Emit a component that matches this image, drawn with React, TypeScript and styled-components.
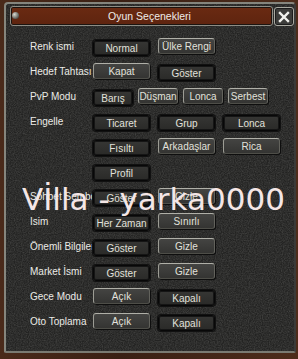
import React from 'react';
import styled, { createGlobalStyle } from 'styled-components';

const GlobalStyle = createGlobalStyle`
  html, body {
    margin: 0;
    padding: 0;
    background: #3f2416;
  }
  * {
    box-sizing: border-box;
  }
`;

const Frame = styled.div`
  width: 298px;
  height: 359px;
  padding: 2px 2px 6px 4px;
  background: linear-gradient(90deg, #4a2a1a, #3a2014 40%, #4d2c1b);
  font-family: 'Liberation Sans', Arial, sans-serif;
`;

const Panel = styled.div`
  position: relative;
  height: 100%;
  display: flex;
  flex-direction: column;
  background: #232322;
  border: 2px solid;
  border-color: #85857d #3a3a38 #7a7a72 #85857d;
  border-radius: 4px 4px 2px 2px;
  overflow: hidden;
`;

const Texture = styled.svg`
  position: absolute;
  inset: 0;
  width: 100%;
  height: 100%;
  pointer-events: none;
`;

const TitleRow = styled.div`
  position: relative;
  display: flex;
  gap: 1px;
  padding: 2px 0 0 4px;
`;

const TitleBar = styled.div`
  position: relative;
  flex: 1;
  height: 20px;
  display: flex;
  align-items: center;
  justify-content: center;
  padding-left: 16px;
  background: linear-gradient(#6a2a12, #5e240f);
  border: 1px solid #8d8d85;
  box-shadow: inset 0 0 0 1px #1c1410;
  border-radius: 3px;
  color: #f0ece8;
  font-size: 10.5px;
  overflow: hidden;
`;

const Pin = styled.span`
  position: absolute;
  left: 1px;
  top: 5px;
  width: 7px;
  height: 7px;
  border-radius: 50%;
  background: radial-gradient(circle at 35% 35%, #d8d8d0, #6a6a64 60%, #2a2a28);
`;

const CloseButton = styled.div`
  width: 20px;
  height: 19px;
  margin-top: 1px;
  display: flex;
  align-items: center;
  justify-content: center;
  background: #3c3c3a;
  border: 1px solid #a9a9a1;
  box-shadow: inset 0 0 0 1px #1c1c1c;
  border-radius: 3px;
`;

const Content = styled.div`
  position: relative;
  display: flex;
  flex-direction: column;
  gap: 9px;
  margin-top: 14px;
  padding-left: 24px;
`;

const Row = styled.div`
  display: grid;
  grid-template-columns: 63px auto;
  align-items: start;
`;

const Label = styled.div`
  height: 16px;
  line-height: 13px;
  font-size: 10px;
  color: #ebebe6;
  white-space: nowrap;
  overflow: hidden;
`;

const Buttons = styled.div<{ cols: number; width: number; gap: number }>`
  display: grid;
  grid-template-columns: repeat(${({ cols, width }) => `${cols}, ${width}px`});
  column-gap: ${({ gap }) => gap}px;
  row-gap: 9px;
`;

const Btn = styled.div<{ active?: boolean }>`
  height: 16px;
  display: flex;
  align-items: center;
  justify-content: center;
  font-size: 10px;
  color: #e2e2dc;
  white-space: nowrap;
  border-radius: 3px;
  border: 1px solid;
  ${({ active }) =>
    active
      ? `
    border-color: #b0b0a8 #62625c #4e4e48 #9c9c94;
    background: linear-gradient(#444442, #343432);
    box-shadow: 1px 1px 0 #0e0e0e;
    transform: translateY(-2px);
  `
      : `
    border-color: #080808;
    background: linear-gradient(#363634, #2a2a28);
    box-shadow: inset 0 0 0 1px #151515, 0 0 0 1px #111;
  `}
`;

const Watermark = styled.div`
  position: absolute;
  left: 16px;
  top: 180px;
  font-family: 'DejaVu Sans', sans-serif;
  font-size: 31px;
  line-height: 1;
  color: #f4e6e6;
  white-space: pre;
  pointer-events: none;
`;

type Opt = { text: string; active?: boolean };

const rows: { label: string; cols: number; width: number; gap: number; options: Opt[] }[] = [
  { label: 'Renk ismi', cols: 2, width: 57, gap: 8, options: [{ text: 'Normal' }, { text: 'Ülke Rengi', active: true }] },
  { label: 'Hedef Tahtası', cols: 2, width: 57, gap: 8, options: [{ text: 'Kapat', active: true }, { text: 'Göster' }] },
  {
    label: 'PvP Modu',
    cols: 4,
    width: 40,
    gap: 5,
    options: [{ text: 'Barış' }, { text: 'Düşman', active: true }, { text: 'Lonca', active: true }, { text: 'Serbest', active: true }],
  },
  {
    label: 'Engelle',
    cols: 3,
    width: 57,
    gap: 8,
    options: [
      { text: 'Ticaret' },
      { text: 'Grup' },
      { text: 'Lonca' },
      { text: 'Fısıltı' },
      { text: 'Arkadaşlar', active: true },
      { text: 'Rica', active: true },
      { text: 'Profil' },
    ],
  },
  { label: 'Sohbet Sembolü', cols: 2, width: 57, gap: 8, options: [{ text: 'Göster' }, { text: 'Gizle', active: true }] },
  { label: 'Isim', cols: 2, width: 57, gap: 8, options: [{ text: 'Her Zaman' }, { text: 'Sınırlı', active: true }] },
  { label: 'Önemli Bilgiler', cols: 2, width: 57, gap: 8, options: [{ text: 'Göster' }, { text: 'Gizle', active: true }] },
  { label: 'Market İsmi', cols: 2, width: 57, gap: 8, options: [{ text: 'Göster' }, { text: 'Gizle', active: true }] },
  { label: 'Gece Modu', cols: 2, width: 57, gap: 8, options: [{ text: 'Açık', active: true }, { text: 'Kapalı' }] },
  { label: 'Oto Toplama', cols: 2, width: 57, gap: 8, options: [{ text: 'Açık', active: true }, { text: 'Kapalı' }] },
];

export default function App() {
  return (
    <>
      <GlobalStyle />
      <Frame>
        <Panel>
          <Texture>
            <filter id="stone" colorInterpolationFilters="sRGB">
              <feTurbulence type="fractalNoise" baseFrequency="0.85" numOctaves="2" seed="4" />
              <feColorMatrix values="0 0 0 0 0.42  0 0 0 0 0.42  0 0 0 0 0.41  0 0 0 0.7 -0.2" />
            </filter>
            <rect width="100%" height="100%" filter="url(#stone)" />
          </Texture>
          <TitleRow>
            <TitleBar>
              <Pin />
              Oyun Seçenekleri
            </TitleBar>
            <CloseButton>
              <svg width="12" height="12" viewBox="0 0 12 12">
                <path d="M2 2 L10 10 M10 2 L2 10" stroke="#f2f2ee" strokeWidth="2.4" strokeLinecap="square" />
              </svg>
            </CloseButton>
          </TitleRow>
          <Content>
            {rows.map((row, i) => (
              <Row key={i}>
                <Label>{row.label}</Label>
                <Buttons cols={row.cols} width={row.width} gap={row.gap}>
                  {row.options.map((o, j) => (
                    <Btn key={j} active={o.active}>
                      {o.text}
                    </Btn>
                  ))}
                </Buttons>
              </Row>
            ))}
          </Content>
          <Watermark>Vİlla - yarka0000</Watermark>
        </Panel>
      </Frame>
    </>
  );
}
